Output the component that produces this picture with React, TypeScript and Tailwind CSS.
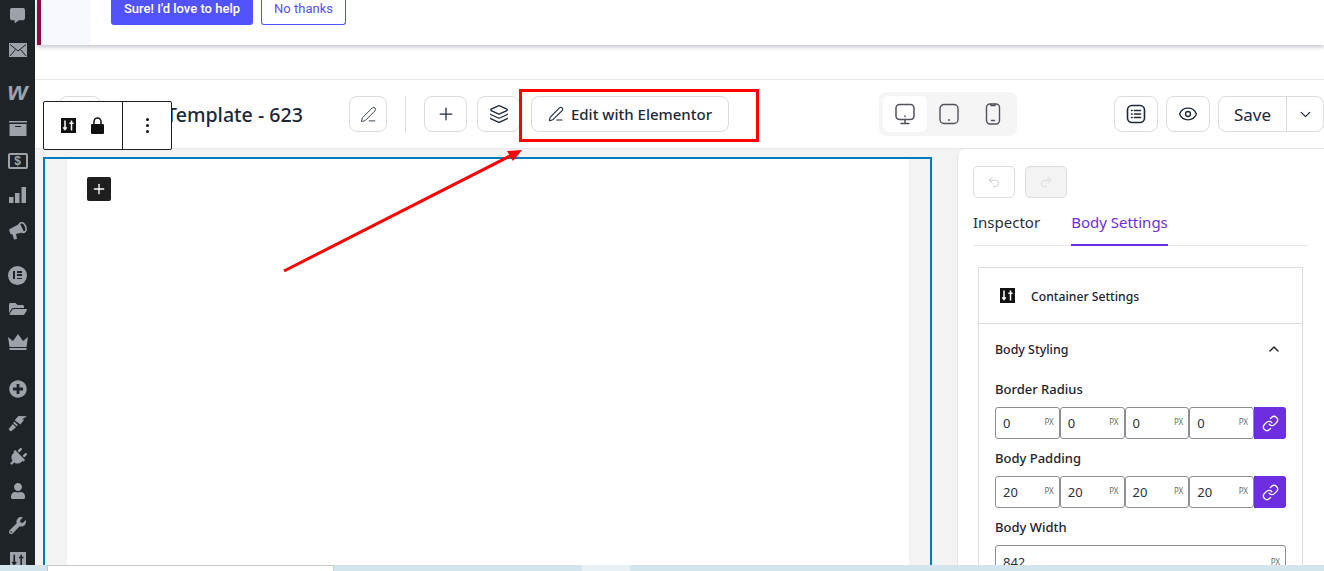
import {
  ChevronDown,
  ChevronUp,
  Eye,
  Layers,
  Link,
  PenLine,
  Plus,
  Redo2,
  Undo2,
} from "lucide-react";
import { FaCommentAlt, FaFolderOpen, FaPlug, FaPlusCircle, FaUser, FaWrench } from "react-icons/fa";

const noto = "font-['Noto_Sans',sans-serif]";

function SlidersBox({ className, line = "#fff" }: { className: string; line?: string }) {
  return (
    <svg viewBox="0 0 15 15" className={className}>
      <rect width="15" height="15" fill="currentColor" />
      <path
        d="M4 2.500v9M2.200 9.400 4 11.600l1.800-2.200M10.500 2.500v10M8.400 5.200h4.200"
        stroke={line}
        strokeWidth="1.500"
        fill="none"
      />
    </svg>
  );
}

function ElementorMark() {
  return (
    <div className="flex h-[19px] w-[19px] items-center justify-center gap-[2px] rounded-full bg-[#9ca2a7]">
      <div className="h-[8px] w-[2px] bg-[#1d2327]" />
      <div className="flex h-[8px] w-[5px] flex-col justify-between">
        <div className="h-[1.5px] bg-[#1d2327]" />
        <div className="h-[1.5px] bg-[#1d2327]" />
        <div className="h-[1.5px] bg-[#1d2327]" />
      </div>
    </div>
  );
}

const sideIcons = [
  { mt: "mt-[5px]", node: <FaCommentAlt className="h-[15px] w-[15px]" /> },
  {
    mt: "mt-[15px]",
    node: (
      <svg viewBox="0 0 18 14" className="h-[14px] w-[18px]">
        <rect width="18" height="14" fill="currentColor" />
        <path d="M1 1.500 9 8l8-6.500M1 13l5.500-6.500M17 13l-5.500-6.500" stroke="#1d2327" strokeWidth="1" fill="none" />
      </svg>
    ),
  },
  {
    mt: "mt-[21px]",
    node: (
      <span className="font-['Liberation_Sans',sans-serif] text-[26px] leading-none font-bold italic">
        w
      </span>
    ),
  },
  {
    mt: "mt-[17px]",
    node: (
      <svg viewBox="0 0 18 15" className="h-[15px] w-[18px]">
        <rect width="18" height="1.500" fill="currentColor" />
        <rect x="0.500" y="3" width="17" height="12" fill="currentColor" />
        <rect x="6" y="5" width="6" height="1" fill="#1d2327" />
      </svg>
    ),
  },
  {
    mt: "mt-[13px]",
    node: (
      <div className="flex h-[16px] w-[20px] items-center justify-center rounded-[2px] border-2 border-[#9ca2a7] font-['Liberation_Sans',sans-serif] text-[12px] leading-none font-bold">
        $
      </div>
    ),
  },
  {
    mt: "mt-[14px]",
    node: (
      <svg viewBox="0 0 17 16" className="h-[16px] w-[17px]" fill="currentColor">
        <rect y="10" width="4.500" height="6" />
        <rect x="6" y="6" width="4.500" height="10" />
        <rect x="12.500" width="4.500" height="16" />
      </svg>
    ),
  },
  {
    mt: "mt-[16px]",
    node: (
      <svg viewBox="0 0 18 18" className="h-[18px] w-[18px]" fill="currentColor">
        <path d="M0 7.500 11 1.500l4 8.500-8 2 1 5-3 .5-1.500-5L1.500 12Z" />
        <ellipse cx="13.500" cy="5.500" rx="3.300" ry="5" fill="none" stroke="currentColor" strokeWidth="1.600" transform="rotate(-20 13.500 5.500)" />
      </svg>
    ),
  },
  { mt: "mt-[24px]", node: <ElementorMark /> },
  { mt: "mt-[14px]", node: <FaFolderOpen className="h-[16px] w-[18px]" /> },
  {
    mt: "mt-[13px]",
    node: (
      <svg viewBox="0 0 20 16" className="h-[16px] w-[20px]" fill="currentColor">
        <path d="M0 3 5 7l5-7 5 7 5-4-1.500 10H1.500ZM1.500 14h17v2h-17Z" />
      </svg>
    ),
  },
  { mt: "mt-[27px]", node: <FaPlusCircle className="h-[18px] w-[18px]" /> },
  {
    mt: "mt-[14px]",
    node: (
      <svg viewBox="0 0 20 18" className="h-[18px] w-[19px]" fill="currentColor">
        <path d="M7 6 11 1.500l9 .5-5 3 2 .5-4 5Z" />
        <path d="M6.500 7.500 10.500 11 9 12.500 5.500 9ZM5 10l3.500 3.500L3 18 .5 15.500Z" />
      </svg>
    ),
  },
  { mt: "mt-[14px]", node: <FaPlug className="h-[19px] w-[19px] rotate-45" /> },
  { mt: "mt-[14px]", node: <FaUser className="h-[16px] w-[16px]" /> },
  { mt: "mt-[14px]", node: <FaWrench className="h-[17px] w-[17px]" /> },
  { mt: "mt-[15px]", node: <SlidersBox className="h-[18px] w-[16px]" line="#1d2327" /> },
];

function ToolButton({ className, children }: { className: string; children: React.ReactNode }) {
  return (
    <button
      className={`flex h-[36px] items-center justify-center rounded-[8px] border border-[#dcdcde] bg-white text-[#1d2939] ${className}`}
    >
      {children}
    </button>
  );
}

function UnitInput({ value }: { value: string }) {
  return (
    <div className="flex h-[32px] flex-1 items-center justify-between rounded-[3px] border border-[#8c8f94] bg-white pr-[5px] pl-[7px]">
      <span className="mt-[2px] text-[13px] text-[#2c3338]">{value}</span>
      <span className="mb-[2px] text-[8px] text-[#6b6b6b]">PX</span>
    </div>
  );
}

function SpacingRow({ value }: { value: string }) {
  return (
    <div className="flex">
      <UnitInput value={value} />
      <UnitInput value={value} />
      <UnitInput value={value} />
      <UnitInput value={value} />
      <button className="flex h-[32px] w-[32px] shrink-0 items-center justify-center rounded-r-[3px] bg-[#6d2ee2] text-white">
        <Link className="h-[17px] w-[17px]" strokeWidth={1.8} />
      </button>
    </div>
  );
}

function Header() {
  return (
    <div className={`flex h-[70px] shrink-0 items-center border-t border-b border-[#e8e8e8] bg-white ${noto}`}>
      <ToolButton className="ml-[24px] w-[42px]">
        <span />
      </ToolButton>
      <div className="ml-[65px] w-[183px] pt-[2px] text-[19.6px] leading-none font-medium text-[#1d2939]">
        Template - 623
      </div>
      <ToolButton className="w-[38px]">
        <PenLine className="h-[17px] w-[17px]" strokeWidth={1.2} />
      </ToolButton>
      <div className="ml-[18px] h-[36px] w-px bg-[#dcdcde]" />
      <ToolButton className="ml-[18px] w-[43px]">
        <Plus className="h-[20px] w-[20px]" strokeWidth={1.5} />
      </ToolButton>
      <ToolButton className="ml-[10px] w-[43px]">
        <Layers className="h-[20px] w-[20px]" strokeWidth={1.5} />
      </ToolButton>
      <ToolButton className="ml-[11px] w-[198px] gap-[7px]">
        <PenLine className="h-[16px] w-[16px]" strokeWidth={1.6} />
        <span className="pt-[1px] text-[15px] font-medium">Edit with Elementor</span>
      </ToolButton>
      <div className="ml-[150px] flex h-[44px] w-[138px] items-center rounded-[8px] bg-[#f5f5f5] pl-[4px] text-[#51525c]">
        <div className="flex h-[36px] w-[44px] items-center justify-center rounded-[6px] bg-white">
          <svg viewBox="0 0 22 22" fill="none" stroke="currentColor" strokeWidth="1.500" className="h-[22px] w-[22px]">
            <rect x="2" y="1.500" width="18" height="15" rx="3.500" />
            <path d="M11 13v.5M11 16.500v4M7 20.500h8" strokeLinecap="round" />
          </svg>
        </div>
        <div className="flex h-[36px] w-[44px] items-center justify-center">
          <svg viewBox="0 0 22 22" fill="none" stroke="currentColor" strokeWidth="1.400" className="h-[22px] w-[22px]">
            <rect x="2" y="1.500" width="18" height="19" rx="4" />
            <path d="M10.500 17h1" strokeLinecap="round" />
          </svg>
        </div>
        <div className="flex h-[36px] w-[44px] items-center justify-center">
          <svg viewBox="0 0 22 24" fill="none" stroke="currentColor" strokeWidth="1.400" className="h-[24px] w-[22px]">
            <rect x="4.500" y="2" width="13" height="20" rx="3.500" />
            <path d="M9 2.500v1h4v-1M9.500 18.500h3" strokeLinecap="round" />
          </svg>
        </div>
      </div>
      <ToolButton className="ml-[97px] w-[44px]">
        <svg viewBox="0 0 20 20" fill="none" stroke="currentColor" strokeWidth="1.600" className="h-[20px] w-[20px]">
          <rect x="1.500" y="1.500" width="17" height="17" rx="4.500" />
          <path d="M5.500 6.500h.6M5.500 10h.6M5.500 13.500h.6M8.500 6.500h6M8.500 10h6M8.500 13.500h6" strokeLinecap="round" />
        </svg>
      </ToolButton>
      <ToolButton className="ml-[8px] w-[44px]">
        <Eye className="h-[20px] w-[20px]" strokeWidth={1.6} />
      </ToolButton>
      <div className="ml-[8px] flex h-[36px] w-[106px] shrink-0 rounded-[8px] border border-[#dcdcde] text-[#1d2939]">
        <div className="flex w-[68px] items-center justify-center border-r border-[#dcdcde] pt-[1px] text-[17px]">
          Save
        </div>
        <div className="flex flex-1 items-center justify-center">
          <ChevronDown className="h-[17px] w-[17px]" strokeWidth={1.8} />
        </div>
      </div>
    </div>
  );
}

function SettingsPanel() {
  return (
    <div className={`ml-[25px] w-[367px] shrink-0 rounded-tl-[8px] border-l border-[#e4e4e4] bg-white pt-[17px] pl-[15px] ${noto}`}>
      <div className="flex gap-[10px]">
        <div className="flex h-[32px] w-[42px] items-center justify-center rounded-[5px] border border-[#dcdcde] text-[#c6c6c9]">
          <Undo2 className="h-[14px] w-[14px]" strokeWidth={1.5} />
        </div>
        <div className="flex h-[32px] w-[42px] items-center justify-center rounded-[5px] border border-[#dcdcde] bg-[#f3f3f3] text-[#d5d5d8]">
          <Redo2 className="h-[14px] w-[14px]" strokeWidth={1.5} />
        </div>
      </div>
      <div className="mt-[11px] flex h-[37px] w-[335px] items-start gap-[31px] border-b border-[#e8e8ee] text-[15px]">
        <div className="pt-[2px] leading-[22px] text-[#2b2f38]">Inspector</div>
        <div className="h-[37px] border-b-2 border-[#6d2ee2] pt-[2px] leading-[22px] text-[#6d2ee2]">
          Body Settings
        </div>
      </div>
      <div className="mt-[21px] ml-[5px] h-[300px] w-[325px] border border-[#dedede]">
        <div className="flex h-[56px] items-center border-b border-[#dedede] pl-[21px]">
          <SlidersBox className="h-[15px] w-[15px] text-[#111]" />
          <span className="ml-[16px] pt-[3px] text-[12.2px] font-medium text-[#1e2530]">Container Settings</span>
        </div>
        <div className="px-[16px]">
          <div className="mt-[17px] flex items-center justify-between pr-[4px]">
            <span className="text-[12.4px] leading-[18px] font-medium text-[#1e2530]">Body Styling</span>
            <ChevronUp className="mb-[2px] h-[16px] w-[16px] text-[#1e1e1e]" strokeWidth={2} />
          </div>
          <div className="mt-[21px] text-[13px] leading-[18px] font-medium text-[#1e2530]">Border Radius</div>
          <div className="mt-[9px]">
            <SpacingRow value="0" />
          </div>
          <div className="mt-[10px] text-[13px] leading-[18px] font-medium text-[#1e2530]">Body Padding</div>
          <div className="mt-[9px]">
            <SpacingRow value="20" />
          </div>
          <div className="mt-[10px] text-[13px] leading-[18px] font-medium text-[#1e2530]">Body Width</div>
          <div className="mt-[9px] flex h-[32px] justify-between rounded-[3px] border border-[#8c8f94] pt-[7px] pr-[5px] pl-[7px]">
            <span className="text-[13px] text-[#2c3338]">842</span>
            <span className="mt-[3px] text-[8px] text-[#6b6b6b]">PX</span>
          </div>
        </div>
      </div>
    </div>
  );
}

export default function App() {
  return (
    <div className="relative flex h-[571px] w-[1324px] flex-col overflow-hidden bg-white">
      <div className="flex h-[565px] shrink-0 overflow-hidden">
        <aside className="flex w-[35px] shrink-0 flex-col items-center overflow-hidden bg-[#1d2327] text-[#9ca2a7]">
          {sideIcons.map((item, i) => (
            <div key={i} className={`flex h-[20px] shrink-0 items-center justify-center ${item.mt}`}>
              {item.node}
            </div>
          ))}
        </aside>
        <main className="flex w-[1289px] flex-col">
          <div className="ml-[2px] flex h-[45px] shrink-0 border-l-[4px] border-[#8f0b43] bg-white shadow-[0_2px_4px_rgba(60,60,90,0.3)]">
            <div className="h-full w-[50px] bg-[#f8f8ff]" />
            <div className="ml-[20px] flex gap-[8px] font-['Roboto',sans-serif] text-[13px]">
              <div className="flex h-[25px] w-[142px] items-center justify-center rounded-b-[3px] bg-[#5352ff] pb-[8px] font-medium text-white">
                Sure! I'd love to help
              </div>
              <div className="flex h-[25px] w-[85px] items-center justify-center rounded-b-[3px] border border-t-0 border-[#5352ff] pb-[6px] text-[#5352ff]">
                No thanks
              </div>
            </div>
          </div>
          <div className="h-[34px] shrink-0" />
          <Header />
          <div className="flex min-h-0 flex-1 bg-[#f3f3f3]">
            <div className="mt-[8px] ml-[8px] flex w-[889px] shrink-0 border-2 border-b-0 border-[#007cba]">
              <div className="w-[22px] shrink-0 bg-[#f3f3f3]" />
              <div className="flex-1 bg-white pt-[18px] pl-[20px]">
                <div className="flex h-[24px] w-[24px] items-center justify-center rounded-[2px] bg-[#1e1e1e] text-white">
                  <Plus className="h-[16px] w-[16px]" strokeWidth={2} />
                </div>
              </div>
              <div className="w-[21px] shrink-0 bg-[#f3f3f3]" />
            </div>
            <SettingsPanel />
          </div>
        </main>
      </div>
      <div className="flex h-[6px] shrink-0 bg-[#d5e5ed]">
        <div className="ml-[47px] h-[6px] w-[287px] border-x border-t border-[#c8c8c8] bg-white" />
        <div className="ml-[248px] h-[6px] w-[48px] bg-[#e8f2f6]" />
      </div>

      {/* block toolbar over the header */}
      <div className="absolute top-[101px] left-[43px] flex h-[49px] w-[129px] rounded-[2px] border border-[#1e1e1e] bg-white text-[#111]">
        <div className="flex w-[79px] items-center gap-[15px] border-r border-[#1e1e1e] pl-[17px]">
          <SlidersBox className="h-[15px] w-[15px]" />
          <svg viewBox="0 0 13 17" className="h-[17px] w-[13px]">
            <path d="M3 8V4.500a3.500 3.500 0 0 1 7 0V8" stroke="currentColor" strokeWidth="1.500" fill="none" />
            <rect y="7" width="13" height="10" rx="1" fill="currentColor" />
          </svg>
        </div>
        <div className="flex flex-1 flex-col items-center justify-center gap-[3px]">
          <div className="h-[3px] w-[3px] rounded-full bg-[#111]" />
          <div className="h-[3px] w-[3px] rounded-full bg-[#111]" />
          <div className="h-[3px] w-[3px] rounded-full bg-[#111]" />
        </div>
      </div>

      {/* red annotations */}
      <div className="absolute top-[89px] left-[519px] h-[53px] w-[240px] border-[3px] border-[#fe0000]" />
      <svg className="absolute top-[140px] left-[275px] h-[140px] w-[260px]" viewBox="0 0 260 140">
        <path d="M9 131 237 15" stroke="#fe0000" strokeWidth="3" fill="none" />
        <path d="M247 10 232 11 238 21Z" fill="#fe0000" />
      </svg>
    </div>
  );
}
